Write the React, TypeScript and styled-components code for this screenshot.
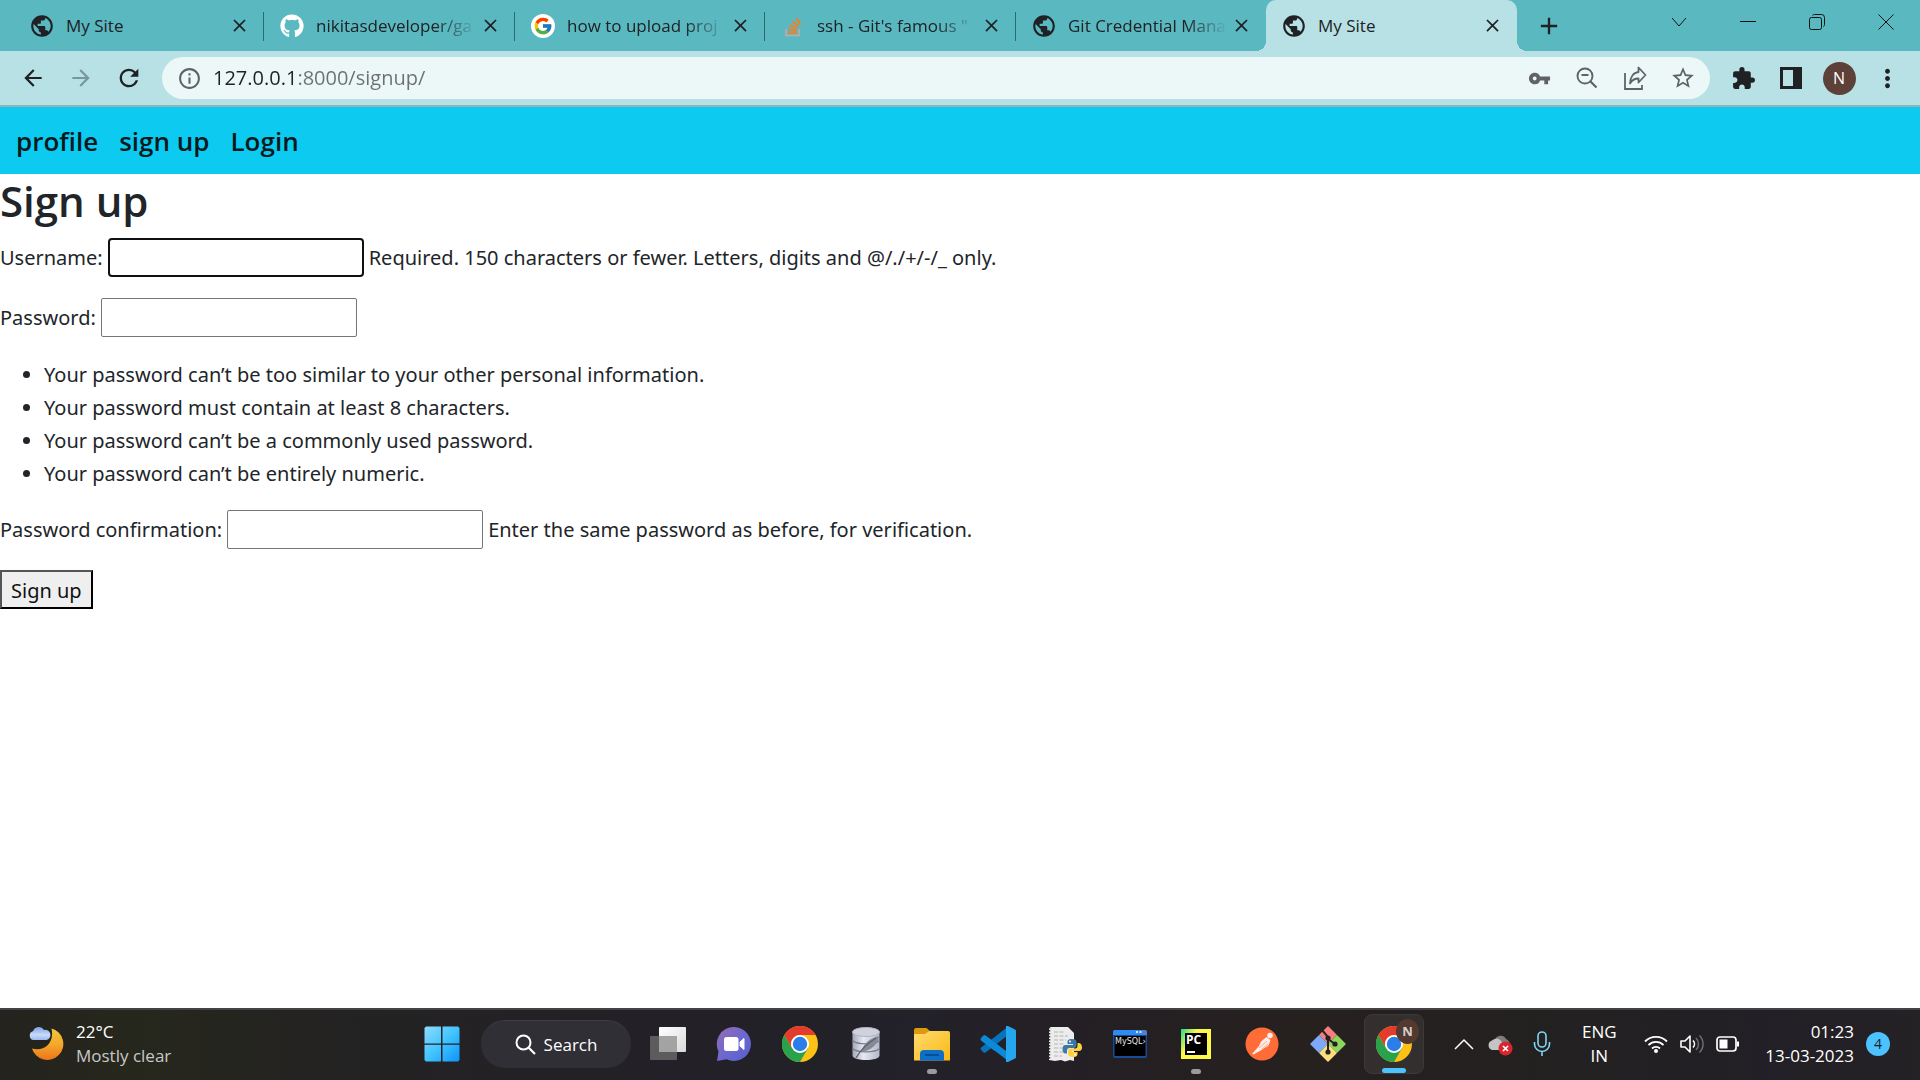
import React, { ReactNode } from "react";
import styled, { createGlobalStyle, css } from "styled-components";
import {
  MdAdd,
  MdArrowBack,
  MdArrowForward,
  MdClose,
  MdExtension,
  MdInfoOutline,
  MdMoreVert,
  MdPublic,
  MdRefresh,
  MdStarOutline,
  MdVpnKey,
} from "react-icons/md";
import { FaGithub } from "react-icons/fa";
import { FcGoogle } from "react-icons/fc";

const font = `"Segoe UI", "Open Sans", "Noto Sans", sans-serif`;
const siteFont = `"Segoe UI", "Noto Sans", "Open Sans", sans-serif`;

const GlobalStyle = createGlobalStyle`
  *, *::before, *::after { box-sizing: border-box; }
  body { margin: 0; background: #fff; font-family: ${font}; }
  button, input { font-family: inherit; }
  svg { display: block; flex: none; }
`;

const Screen = styled.div`
  display: flex;
  flex-direction: column;
  min-height: 100vh;
`;

const bareButton = css`
  display: flex;
  align-items: center;
  justify-content: center;
  flex: none;
  margin: 0;
  padding: 0;
  border: 0;
  background: none;
  color: inherit;
`;

/* ---------- browser frame ---------- */

const TabStrip = styled.header`
  display: flex;
  height: 51px;
  padding-left: 14px;
  background: #5ab8c1;
  color: #202124;
`;

const Tab = styled.div<{ $active?: boolean; $divided?: boolean }>`
  position: relative;
  display: flex;
  align-items: center;
  width: ${(p) => (p.$active ? 252 : 250)}px;
  padding: 0 13px 0 16px;
  border-radius: 10px 10px 0 0;
  background: ${(p) => (p.$active ? "#b7e1e4" : "transparent")};

  &:nth-child(even) {
    width: 251px;
  }

  &:last-of-type {
    width: 252px;
  }

  ${(p) =>
    p.$divided &&
    css`
      &::after {
        content: "";
        position: absolute;
        right: 0;
        top: 12px;
        width: 1px;
        height: 29px;
        background: #2f6a70;
      }
    `}

  ${(p) =>
    p.$active &&
    css`
      &::before,
      &::after {
        content: "";
        position: absolute;
        bottom: 0;
        width: 10px;
        height: 10px;
      }
      &::before {
        left: -10px;
        background: radial-gradient(circle at 0 0, transparent 10px, #b7e1e4 10px);
      }
      &::after {
        right: -10px;
        background: radial-gradient(circle at 100% 0, transparent 10px, #b7e1e4 10px);
      }
    `}
`;

const TabLabel = styled.button<{ $fade?: boolean }>`
  ${bareButton}
  flex: 1;
  min-width: 0;
  justify-content: flex-start;
  gap: 12px;
  height: 40px;
  font-size: 17px;
  line-height: 24px;
  white-space: nowrap;
  ${(p) =>
    p.$fade &&
    css`
      mask-image: linear-gradient(to right, #000 calc(100% - 44px), transparent calc(100% - 2px));
    `}
`;

const CloseButton = styled.button`
  ${bareButton}
  width: 24px;
  height: 24px;
  font-size: 21px;
`;

const NewTab = styled.button`
  ${bareButton}
  width: 44px;
  margin-left: 10px;
  font-size: 28px;
`;

const WindowControls = styled.div`
  display: flex;
  height: 44px;
  margin-left: auto;
`;

const WindowButton = styled.button`
  ${bareButton}
  width: 69px;
`;

const Favicon = styled.span<{ $disc?: boolean }>`
  display: flex;
  align-items: center;
  justify-content: center;
  flex: none;
  width: 24px;
  height: 24px;
  border-radius: 50%;
  background: ${(p) => (p.$disc ? "#fff" : "none")};
`;

const Toolbar = styled.div`
  display: flex;
  align-items: center;
  height: 56px;
  padding: 0 9px;
  border-bottom: 2px solid #8fb3b6;
  background: #b7e1e4;
  color: #202124;
`;

const ToolButton = styled.button<{ $muted?: boolean }>`
  ${bareButton}
  width: 48px;
  height: 40px;
  font-size: 26px;
  color: ${(p) => (p.$muted ? "#78979a" : "inherit")};
`;

const AddressBar = styled.div`
  display: flex;
  align-items: center;
  flex: 1;
  height: 42px;
  margin: 0 9px;
  padding: 0 3px 0 15px;
  border-radius: 21px;
  background: #ecf8f8;
  color: #5f6368;
`;

const Address = styled.input`
  flex: 1;
  min-width: 0;
  height: 30px;
  margin-left: 11px;
  padding: 0;
  border: 0;
  outline: 0;
  font-size: 20px;
  line-height: 30px;
  color: transparent;
  background: linear-gradient(to right, #202124 81px, #6b7073 81px);
  background-clip: text;
`;

const Avatar = styled.span`
  display: flex;
  align-items: center;
  justify-content: center;
  width: 33px;
  height: 33px;
  border-radius: 50%;
  background: #5d4037;
  color: #fff;
  font-size: 16px;
`;

/* ---------- site ---------- */

const SiteNav = styled.nav`
  display: flex;
  align-items: center;
  gap: 21px;
  height: 67px;
  padding: 0 16px;
  background: #0dcaf0;
`;

const NavLink = styled.a`
  color: #06191d;
  font-size: 26px;
  font-weight: 600;
  line-height: 40px;
  text-decoration: none;
`;

const Page = styled.main`
  flex: 1;
  background: #fff;
  color: #212529;
  font-family: ${siteFont};
  font-size: 20px;
`;

const Title = styled.h1`
  margin: 0 0 11px;
  font-family: ${font};
  font-size: 42px;
  font-weight: 600;
  line-height: 53px;
`;

const Field = styled.div`
  display: flex;
  align-items: center;
  gap: 5px;
  margin-bottom: 21px;
  line-height: 39px;
`;

const TextInput = styled.input<{ $ring?: boolean }>`
  width: 256px;
  height: 39px;
  padding: 2px 4px;
  border: ${(p) => (p.$ring ? "2px solid #101010" : "1px solid #767676")};
  border-radius: ${(p) => (p.$ring ? 4 : 2)}px;
  outline: 0;
  background: #fff;
  font-size: 20px;
`;

const Rules = styled.ul`
  margin: 0 0 20px;
  padding-left: 44px;
  line-height: 33px;
`;

const Submit = styled.button`
  height: 39px;
  padding: 2px 9px 0;
  border: 2px solid;
  border-color: #555 #000 #000 #555;
  background: #efefef;
  color: #111;
  font-size: 20px;
  line-height: 33px;
`;

/* ---------- taskbar ---------- */

const Taskbar = styled.footer`
  display: flex;
  align-items: center;
  height: 72px;
  padding-bottom: 2px;
  border-top: 2px solid #434245;
  background: linear-gradient(
    to right,
    #24231f,
    #26271c 7%,
    #242322 16%,
    #232126 30%,
    #232129 48%,
    #241f24 56%,
    #26201f 68%,
    #232120 80%,
    #221f26 92%,
    #242225
  );
  color: #fff;
  font-size: 17px;
  line-height: 24px;
`;

const Weather = styled.button`
  ${bareButton}
  justify-content: flex-start;
  gap: 12px;
  width: 409px;
  padding-left: 28px;
  font-size: 17px;
  line-height: 24px;
  text-align: left;
`;

const Lines = styled.span<{ $align?: string }>`
  display: flex;
  flex-direction: column;
  align-items: ${(p) => p.$align || "flex-start"};
`;

const Dim = styled.span`
  color: #c9c9c8;
`;

const Apps = styled.div`
  display: flex;
  align-items: center;
`;

const AppButton = styled.button<{ $active?: boolean }>`
  ${bareButton}
  position: relative;
  width: 60px;
  height: 60px;
  margin: 0 3px;
  border-radius: 8px;
  ${(p) =>
    p.$active &&
    css`
      border: 1px solid #3d3939;
      background: #322f2e;
    `}
`;

const Running = styled.span<{ $wide?: boolean }>`
  position: absolute;
  bottom: 0;
  left: calc(50% - ${(p) => (p.$wide ? 12 : 5)}px);
  width: ${(p) => (p.$wide ? 24 : 10)}px;
  height: 5px;
  border-radius: 3px;
  background: ${(p) => (p.$wide ? "#4cc2ff" : "#9b9b9f")};
`;

const ProfileBadge = styled.span`
  position: absolute;
  top: 4px;
  right: 4px;
  width: 23px;
  height: 25px;
  border-radius: 50%;
  background: #533930;
  color: #d6cfcc;
  font-size: 13px;
  font-weight: 700;
  line-height: 25px;
  text-align: center;
`;

const Search = styled.button`
  ${bareButton}
  gap: 8px;
  width: 150px;
  height: 48px;
  margin: 0 4px 0 6px;
  border-top: 1px solid #3e3c42;
  border-radius: 24px;
  background: #312f36;
  font-size: 17px;
`;

const Tray = styled.div`
  display: flex;
  align-items: center;
  margin-left: auto;
  padding-right: 30px;
`;

const TrayButton = styled.button`
  ${bareButton}
  width: 36px;
  height: 48px;
  font-size: 17px;
  line-height: 24px;
`;

const Microphone = styled(TrayButton)`
  margin-left: 6px;
`;

const Language = styled(TrayButton)`
  width: 60px;
  margin: 0 9px;
`;

const Clock = styled(TrayButton)`
  width: auto;
  margin-left: 19px;
  gap: 12px;
`;

const Count = styled.span`
  width: 24px;
  height: 24px;
  border-radius: 50%;
  background: #4cc2ff;
  color: #10222c;
  font-size: 14px;
`;

/* ---------- drawings ---------- */

type IconProps = { w?: number; h?: number; box?: string; children: ReactNode };

const Icon = ({ w = 36, h = w, box = "0 0 36 36", children }: IconProps) => (
  <svg width={w} height={h} viewBox={box} fill="none" aria-hidden="true">
    {children}
  </svg>
);

const StackOverflow = () => (
  <Icon w={22} h={24} box="0 0 22 24">
    <path d="M4 15v6.500h13V15" stroke="#c9a9a0" strokeWidth="1.600" />
    <path
      d="M6.500 18.500h8M6.600 15.300l8 .9M7.800 11.500l7.600 2.200M10.200 7.500l6.500 4.500M14 4l4.500 6.200"
      stroke="#f48024"
      strokeWidth="2"
    />
  </Icon>
);

const ShareIcon = () => (
  <Icon w={26} box="0 0 26 26">
    <path d="M3 8v16h17v-4" stroke="currentColor" strokeWidth="1.800" />
    <path
      d="M16.500 2.500l7 7.500-7 7.500v-4c-4 0-6.500 1.500-8.500 5 .3-6.500 3.500-11 8.500-11.500z"
      stroke="currentColor"
      strokeWidth="1.800"
      strokeLinejoin="round"
    />
  </Icon>
);

const ZoomOutIcon = () => (
  <Icon w={24} box="0 0 24 24">
    <circle cx="10" cy="10" r="7.500" stroke="currentColor" strokeWidth="1.900" />
    <path d="M6.500 9h7M15.500 15.500l6 6" stroke="currentColor" strokeWidth="2.200" />
  </Icon>
);

const SidePanelIcon = () => (
  <Icon w={22} box="0 0 22 22">
    <path d="M0 0h22v22H0zM3 3v16h10V3z" fill="currentColor" fillRule="evenodd" />
  </Icon>
);

const MoonIcon = () => (
  <Icon w={36} box="0 0 36 36">
    <defs>
      <linearGradient id="moon" x1="0" y1="0" x2="0" y2="1">
        <stop offset="0" stopColor="#f3c53c" />
        <stop offset=".5" stopColor="#f4a92b" />
        <stop offset="1" stopColor="#ee7419" />
      </linearGradient>
      <linearGradient id="cloud" x1="0" y1="0" x2="0" y2="1">
        <stop offset="0" stopColor="#7fa3e8" />
        <stop offset=".6" stopColor="#c9dbf8" />
        <stop offset="1" stopColor="#9bb9ee" />
      </linearGradient>
    </defs>
    <path d="M23.500 2.500A16 16 0 1 1 4 22.500C15 26 27 18 23.500 2.500z" fill="url(#moon)" />
    <path
      d="M5 14a4.700 4.700 0 0 1 .2-9A6 6 0 0 1 16 4a5 5 0 0 1 2.500 10z"
      fill="url(#cloud)"
    />
  </Icon>
);

const WindowsIcon = () => (
  <Icon w={36}>
    <defs>
      <linearGradient id="win" x1="0" y1="0" x2="1" y2="1">
        <stop offset="0" stopColor="#8fdcff" />
        <stop offset=".5" stopColor="#41c4ff" />
        <stop offset="1" stopColor="#0d94fb" />
      </linearGradient>
    </defs>
    <path
      d="M2 .5h15v17H.500V2zM18.500.500H34L35.500 2v15.500h-17zM.500 18.700H17v16.800H2L.500 34zM18.500 18.700h17V34L34 35.500H18.500z"
      fill="url(#win)"
    />
  </Icon>
);

const TaskViewIcon = () => (
  <Icon>
    <defs>
      <linearGradient id="tv" x1="0" y1="0" x2="1" y2="1">
        <stop offset="0" stopColor="#fff" />
        <stop offset="1" stopColor="#d9d9d9" />
      </linearGradient>
    </defs>
    <rect x="9" y="1" width="27" height="25" rx="1" fill="url(#tv)" />
    <rect x="0" y="10" width="27" height="24" rx="1" fill="#5c5c5c" />
    <path d="M9 10h18v16H9z" fill="#a3a3a3" />
  </Icon>
);

const ChatIcon = () => (
  <Icon>
    <defs>
      <linearGradient id="chat" x1="0" y1="0" x2="1" y2="1">
        <stop offset="0" stopColor="#9a6bb0" />
        <stop offset=".5" stopColor="#6e68cf" />
        <stop offset="1" stopColor="#5560cf" />
      </linearGradient>
    </defs>
    <path d="M18 1a17 17 0 1 1-7.500 32.300L1 35l1.500-9.500A17 17 0 0 1 18 1z" fill="url(#chat)" />
    <rect x="8" y="11" width="14.500" height="14" rx="2.500" fill="#fff" />
    <path d="M24 16l4-3.500v11L24 20z" fill="#fff" stroke="#fff" strokeLinejoin="round" />
  </Icon>
);

const ChromeIcon = () => (
  <Icon>
    <circle cx="18" cy="18" r="18" fill="#fbc116" />
    <path d="M2.400 9A18 18 0 0 0 18 36l7.800-13.500L18 18 10.200 22.500z" fill="#2aa24c" />
    <path d="M2.400 9A18 18 0 0 1 33.600 9H18a9 9 0 0 0-7.800 13.500z" fill="#e33b2e" />
    <circle cx="18" cy="18" r="9" fill="#fff" />
    <circle cx="18" cy="18" r="7.200" fill="#2b7de9" />
  </Icon>
);

const DatabaseIcon = () => (
  <Icon>
    <defs>
      <linearGradient id="db" x1="0" y1="0" x2="1" y2="0">
        <stop offset="0" stopColor="#a3a8b8" />
        <stop offset=".4" stopColor="#e6e8f2" />
        <stop offset="1" stopColor="#b4b8ca" />
      </linearGradient>
    </defs>
    <path d="M4.500 6v23.500c0 6 27 6 27 0V6z" fill="url(#db)" />
    <ellipse cx="18" cy="6" rx="13.500" ry="4.500" fill="#cfd2dc" stroke="#b1b4c0" />
    <path
      d="M4.500 14.500c4 4.500 23 4.500 27 0M4.500 22.500c4 4.500 23 4.500 27 0"
      stroke="#7b7f8b"
      strokeWidth="1.300"
    />
    <path d="M13 26C15 18 22 12 31 10c-1 9-8 14.500-18 16z" fill="#868a95" />
    <path d="M8 32C13 23 20 17 28 12" stroke="#5b5f69" strokeWidth="1.300" />
  </Icon>
);

const FolderIcon = () => (
  <Icon>
    <defs>
      <linearGradient id="folder" x1="0" y1="0" x2="1" y2="1">
        <stop offset="0" stopColor="#ffdc70" />
        <stop offset="1" stopColor="#f9b813" />
      </linearGradient>
    </defs>
    <path d="M0 4a2 2 0 0 1 2-2h10.500L16 5v3H0z" fill="#dc9a0c" />
    <path d="M0 8h11l4.500-3H34a2 2 0 0 1 2 2v27.500H0z" fill="url(#folder)" />
    <path d="M6 34.500V28a4 4 0 0 1 4-4h16a4 4 0 0 1 4 4v6.500z" fill="#0c6fc9" />
    <path d="M11 29h14" stroke="#0a4b94" strokeWidth="2" />
  </Icon>
);

const CodeIcon = () => (
  <Icon>
    <path d="M.8 12.500l2.500-2.700q1.200-1 2.500 0L28 26.500v8.300L1.500 14.800q-1.300-1.200-.7-2.300z" fill="#0c8ad8" />
    <path d="M.8 23.500l2.500 2.700q1.200 1 2.500 0L27.500 9.500V1L1.500 21.200q-1.300 1.200-.7 2.300z" fill="#0873bb" />
    <path d="M.8 12.500l2.500-2.700q1.200-1 2.500 0L20 20.500l-5.500 4.300L1.500 14.800q-1.300-1.200-.7-2.300z" fill="#0c8ad8" />
    <path d="M26 0h2l7 3.400q1 .6 1 1.600v26q0 1-1 1.600L28 36h-2z" fill="#27a6f0" />
  </Icon>
);

const PythonFileIcon = () => (
  <Icon>
    <path d="M3 1h19l6 6v28l-4-1-5 1.500L15 34l-6 1-6-1z" fill="#ececec" />
    <path
      d="M8 6h10M8 10h14M8 14h12M8 18h10M8 22h8M8 26h10M8 30h8"
      stroke="#b4b4b4"
      strokeDasharray="4 1.500"
    />
    <path d="M3.500 1v33" stroke="#333" strokeWidth="1.500" strokeDasharray="1.500 1.500" />
    <path
      d="M26 13c-4 0-4.500 1.500-4.500 3v2H27v1h-7.500c-2 0-3 1.500-3 4s1 4.500 3 4.500H21v-3c0-1.500 1-2.500 2.500-2.500H28c1.500 0 2.500-1 2.500-2.500V16c0-2-1.500-3-4.500-3z"
      fill="#3b78a8"
    />
    <path
      d="M27 31c4 0 4.500-1.500 4.500-3v-2H26v-1h7c2 0 3-1.500 3-3.500S35 17 33 17h-1.500v3c0 1.500-1 2.500-2.500 2.500h-4.500c-1.500 0-2.500 1-2.500 2.500v3c0 2 2 3 5 3z"
      fill="#ffd141"
    />
    <circle cx="24" cy="15.500" r="1" fill="#fff" />
    <circle cx="29" cy="28.500" r="1" fill="#fff" />
  </Icon>
);

const MySqlIcon = () => (
  <Icon>
    <rect x="1" y="4" width="34" height="28" rx="2" fill="#1c4b96" />
    <path d="M1 6a2 2 0 0 1 2-2h30a2 2 0 0 1 2 2v3H1z" fill="#2f8bf0" />
    <path d="M24 6h2m1.500 0h2" stroke="#cfe4ff" strokeWidth="2" />
    <path d="M31 6h2.500" stroke="#e0523f" strokeWidth="2" />
    <path d="M2.500 10h31v20h-31z" fill="#000" />
    <text x="3" y="18" fill="#e8e8e8" fontSize="8" fontFamily="DejaVu Sans, sans-serif">
      MySQL›
    </text>
  </Icon>
);

const PyCharmIcon = () => (
  <Icon>
    <defs>
      <linearGradient id="pc" x1="0" y1="0" x2="1" y2="0.600">
        <stop offset="0" stopColor="#21d789" />
        <stop offset=".4" stopColor="#fcf84a" />
        <stop offset="1" stopColor="#fcf84a" />
      </linearGradient>
    </defs>
    <path d="M3 3h30v30H3z" fill="url(#pc)" />
    <path d="M7 7h22v22H7z" fill="#000" />
    <path d="M9 26h8" stroke="#fff" strokeWidth="2" />
    <text x="8" y="18" fill="#fff" fontSize="12" fontWeight="700" fontFamily="Open Sans, sans-serif">
      PC
    </text>
  </Icon>
);

const PostmanIcon = () => (
  <Icon>
    <circle cx="18" cy="18" r="16.500" fill="#ff6c37" />
    <circle cx="26" cy="9.500" r="2.800" fill="#fbeee9" />
    <path d="M22.500 11l4 3-2 5.500-7 4.500-8 4.500-1.500-.5 7-8 2-4.500z" fill="#fbeee9" />
    <path d="M15 22l8-7M18 23l6-5" stroke="#ff9a76" strokeWidth=".8" />
  </Icon>
);

const GitIcon = () => (
  <Icon>
    <path d="M18 1l8 8-8 8-8-8z" fill="#f37f7f" stroke="#f37f7f" strokeWidth="1.500" strokeLinejoin="round" />
    <path d="M27 10l8 8-8 8-8-8z" fill="#8fd65f" stroke="#8fd65f" strokeWidth="1.500" strokeLinejoin="round" />
    <path d="M9 10l8 8-8 8-8-8z" fill="#7ea9f8" stroke="#7ea9f8" strokeWidth="1.500" strokeLinejoin="round" />
    <path d="M18 19l8 8-8 8-8-8z" fill="#fbdf7e" stroke="#fbdf7e" strokeWidth="1.500" strokeLinejoin="round" />
    <path d="M12 4l6 7v15M18 13l7 5" stroke="#262020" strokeWidth="2" />
    <circle cx="18" cy="12" r="2.600" fill="#262020" />
    <circle cx="25" cy="18" r="2.600" fill="#262020" />
    <circle cx="18" cy="26" r="2.600" fill="#262020" />
  </Icon>
);

const CloudErrorIcon = () => (
  <Icon w={26} h={24} box="0 0 26 24">
    <path d="M8 8a6 6 0 0 1 11-1 6 6 0 0 1 2 10z" fill="#7d7d7d" />
    <path d="M5 18a5 5 0 0 1 0-9.500 6 6 0 0 1 10 2L19 18z" fill="#c4c4c4" />
    <circle cx="18.500" cy="16.500" r="7" fill="#d9252f" />
    <path d="M16 14l5 5m0-5l-5 5" stroke="#fff" strokeWidth="1.700" />
  </Icon>
);

const MicIcon = () => (
  <Icon w={18} h={26} box="0 0 18 26">
    <rect x="5" y="1" width="8" height="15" rx="4" stroke="#7fd6f7" strokeWidth="1.600" />
    <path d="M1.500 11v2a7.500 7.500 0 0 0 15 0v-2M9 20.500V25" stroke="#7fd6f7" strokeWidth="1.600" />
  </Icon>
);

const WifiIcon = () => (
  <Icon w={24} h={20} box="0 0 24 20">
    <path
      d="M1 7.500a15.500 15.500 0 0 1 22 0M4.500 11a10.600 10.600 0 0 1 15 0M8 14.500a5.700 5.700 0 0 1 8 0"
      stroke="#fff"
      strokeWidth="1.800"
    />
    <circle cx="12" cy="17" r="2" fill="#fff" />
  </Icon>
);

const VolumeIcon = () => (
  <Icon w={24} h={20} box="0 0 24 20">
    <path d="M1 7v6h4l5 5V2L5 7z" stroke="#fff" strokeWidth="1.600" strokeLinejoin="round" />
    <path d="M13 6.500a5 5 0 0 1 0 7" stroke="#fff" strokeWidth="1.600" />
    <path d="M16 4a8.500 8.500 0 0 1 0 12M19.500 1.500a12 12 0 0 1 0 17" stroke="#6e6c6c" strokeWidth="1.500" />
  </Icon>
);

const BatteryIcon = () => (
  <Icon w={24} h={18} box="0 0 24 18">
    <rect x="1" y="2" width="19" height="14" rx="3" stroke="#fff" strokeWidth="1.700" />
    <path d="M3.500 4.500h8v9h-8zM21 6.500h2v5h-2z" fill="#fff" />
  </Icon>
);

/* ---------- data ---------- */

const globe = <MdPublic size={26} />;

type TabData = {
  label: string;
  icon: ReactNode;
  disc?: boolean;
  fade?: boolean;
  divided?: boolean;
  active?: boolean;
};

const tabs: TabData[] = [
  { label: "My Site", icon: globe, divided: true },
  { label: "nikitasdeveloper/ga", icon: <FaGithub size={24} color="#fff" />, fade: true, divided: true },
  { label: "how to upload proj", icon: <FcGoogle size={20} />, disc: true, fade: true, divided: true },
  { label: "ssh - Git's famous \"", icon: <StackOverflow />, fade: true, divided: true },
  { label: "Git Credential Mana", icon: globe, fade: true },
  { label: "My Site", icon: globe, active: true },
];

const rules = [
  "Your password can’t be too similar to your other personal information.",
  "Your password must contain at least 8 characters.",
  "Your password can’t be a commonly used password.",
  "Your password can’t be entirely numeric.",
];

const apps: { name: string; icon: ReactNode; running?: boolean }[] = [
  { name: "Task view", icon: <TaskViewIcon /> },
  { name: "Chat", icon: <ChatIcon /> },
  { name: "Chrome", icon: <ChromeIcon /> },
  { name: "Database browser", icon: <DatabaseIcon /> },
  { name: "File Explorer", icon: <FolderIcon />, running: true },
  { name: "Code editor", icon: <CodeIcon /> },
  { name: "Python", icon: <PythonFileIcon /> },
  { name: "MySQL", icon: <MySqlIcon /> },
  { name: "PyCharm", icon: <PyCharmIcon />, running: true },
  { name: "Postman", icon: <PostmanIcon /> },
  { name: "Git", icon: <GitIcon /> },
];

export default function App() {
  return (
    <Screen>
      <GlobalStyle />
      <TabStrip>
        {tabs.map((tab, i) => (
          <Tab key={i} $active={tab.active} $divided={tab.divided}>
            <TabLabel $fade={tab.fade}>
              <Favicon $disc={tab.disc}>{tab.icon}</Favicon>
              {tab.label}
            </TabLabel>
            <CloseButton aria-label="Close tab">
              <MdClose stroke="currentColor" />
            </CloseButton>
          </Tab>
        ))}
        <NewTab aria-label="New tab">
          <MdAdd stroke="currentColor" />
        </NewTab>
        <WindowControls>
          <WindowButton aria-label="Search tabs">
            <Icon w={16} box="0 0 16 16">
              <path d="M1 4l7 8 7-8" stroke="#111" />
            </Icon>
          </WindowButton>
          <WindowButton aria-label="Minimize">
            <Icon w={16} box="0 0 16 16">
              <path d="M0 7.500h16" stroke="#111" />
            </Icon>
          </WindowButton>
          <WindowButton aria-label="Restore">
            <Icon w={16} box="0 0 16 16">
              <rect x=".5" y="3.500" width="12" height="12" rx="2" stroke="#111" />
              <path d="M3.500 1.500Q4 .5 5.500.500h7q3 0 3 3v7q0 1.500-1 2" stroke="#111" />
            </Icon>
          </WindowButton>
          <WindowButton aria-label="Close">
            <Icon w={16} box="0 0 16 16">
              <path d="M.5.500l15 15m0-15l-15 15" stroke="#111" />
            </Icon>
          </WindowButton>
        </WindowControls>
      </TabStrip>

      <Toolbar>
        <ToolButton aria-label="Back">
          <MdArrowBack />
        </ToolButton>
        <ToolButton aria-label="Forward" $muted>
          <MdArrowForward />
        </ToolButton>
        <ToolButton aria-label="Reload">
          <MdRefresh size={28} />
        </ToolButton>
        <AddressBar>
          <MdInfoOutline size={25} />
          <Address aria-label="Address" defaultValue="127.0.0.1:8000/signup/" />
          <ToolButton aria-label="Passwords">
            <MdVpnKey size={23} />
          </ToolButton>
          <ToolButton aria-label="Zoom">
            <ZoomOutIcon />
          </ToolButton>
          <ToolButton aria-label="Share">
            <ShareIcon />
          </ToolButton>
          <ToolButton aria-label="Bookmark">
            <MdStarOutline />
          </ToolButton>
        </AddressBar>
        <ToolButton aria-label="Extensions">
          <MdExtension size={25} />
        </ToolButton>
        <ToolButton aria-label="Side panel">
          <SidePanelIcon />
        </ToolButton>
        <ToolButton aria-label="Profile">
          <Avatar>N</Avatar>
        </ToolButton>
        <ToolButton aria-label="Menu">
          <MdMoreVert size={29} />
        </ToolButton>
      </Toolbar>

      <SiteNav>
        <NavLink href="#profile">profile</NavLink>
        <NavLink href="#signup">sign up</NavLink>
        <NavLink href="#login">Login</NavLink>
      </SiteNav>

      <Page>
        <Title>Sign up</Title>
        <form>
          <Field>
            <label htmlFor="username">Username:</label>
            <TextInput id="username" type="text" $ring />
            <span>Required. 150 characters or fewer. Letters, digits and @/./+/-/_ only.</span>
          </Field>
          <Field>
            <label htmlFor="password1">Password:</label>
            <TextInput id="password1" type="password" />
          </Field>
          <Rules>
            {rules.map((rule) => (
              <li key={rule}>{rule}</li>
            ))}
          </Rules>
          <Field>
            <label htmlFor="password2">Password confirmation:</label>
            <TextInput id="password2" type="password" />
            <span>Enter the same password as before, for verification.</span>
          </Field>
          <Submit type="button">Sign up</Submit>
        </form>
      </Page>

      <Taskbar>
        <Weather>
          <MoonIcon />
          <Lines>
            <span>22°C</span>
            <Dim>Mostly clear</Dim>
          </Lines>
        </Weather>
        <Apps>
          <AppButton aria-label="Start">
            <WindowsIcon />
          </AppButton>
          <Search>
            <Icon w={21} box="0 0 21 21">
              <circle cx="8.500" cy="8.500" r="7" stroke="#fff" strokeWidth="2" />
              <path d="M13.500 13.500l6.500 6.500" stroke="#fff" strokeWidth="2.200" />
            </Icon>
            Search
          </Search>
          {apps.map((app) => (
            <AppButton key={app.name} aria-label={app.name}>
              {app.icon}
              {app.running && <Running />}
            </AppButton>
          ))}
          <AppButton aria-label="Chrome, profile N" $active>
            <ChromeIcon />
            <ProfileBadge>N</ProfileBadge>
            <Running $wide />
          </AppButton>
        </Apps>
        <Tray>
          <TrayButton aria-label="Show hidden icons">
            <Icon w={20} h={12} box="0 0 20 12">
              <path d="M1 11l9-9 9 9" stroke="#fff" strokeWidth="1.500" />
            </Icon>
          </TrayButton>
          <TrayButton aria-label="Cloud storage">
            <CloudErrorIcon />
          </TrayButton>
          <Microphone aria-label="Microphone">
            <MicIcon />
          </Microphone>
          <Language>
            <Lines $align="center">
              <span>ENG</span>
              <span>IN</span>
            </Lines>
          </Language>
          <TrayButton aria-label="Network">
            <WifiIcon />
          </TrayButton>
          <TrayButton aria-label="Volume">
            <VolumeIcon />
          </TrayButton>
          <TrayButton aria-label="Battery">
            <BatteryIcon />
          </TrayButton>
          <Clock>
            <Lines $align="flex-end">
              <span>01:23</span>
              <span>13-03-2023</span>
            </Lines>
            <Count>4</Count>
          </Clock>
        </Tray>
      </Taskbar>
    </Screen>
  );
}
